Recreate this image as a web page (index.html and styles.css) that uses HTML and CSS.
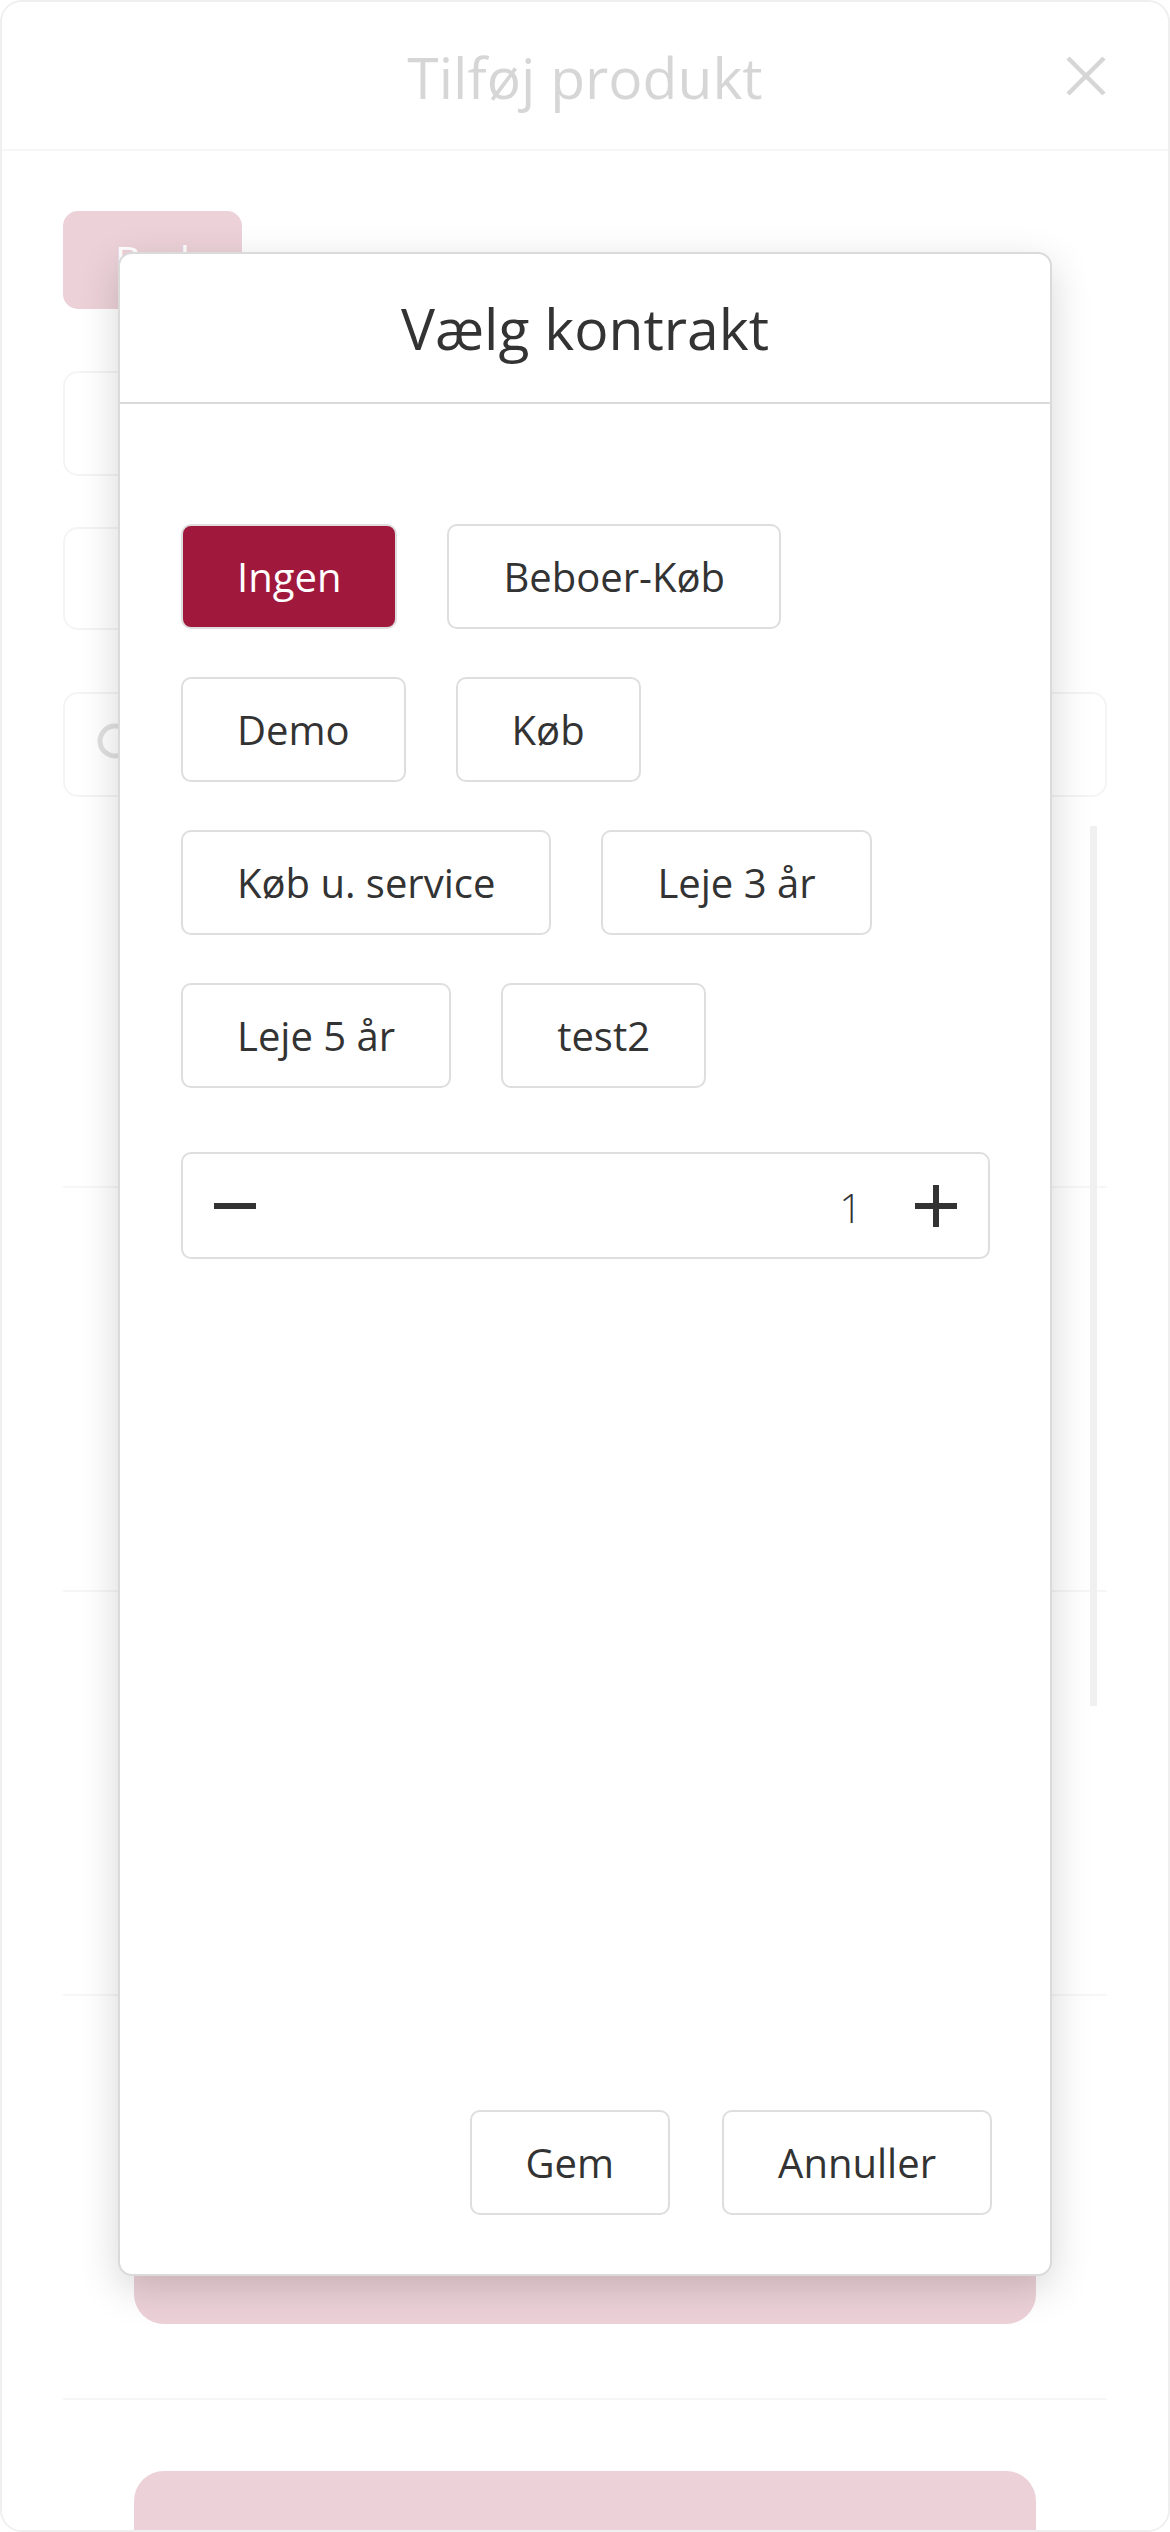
FILE: index.html
```html
<!DOCTYPE html>
<html lang="da">
<head>
<meta charset="utf-8">
<title>Vælg kontrakt</title>
<link rel="stylesheet" href="styles.css">
</head>
<body>
<div class="page">
  <header class="page-header">
    <span class="spacer"></span>
    <h1 class="page-title">Tilføj produkt</h1>
    <button class="close-btn" aria-label="Luk">
      <svg width="40" height="40" viewBox="0 0 40 40"><path d="M2 2 L38 38 M38 2 L2 38" stroke="#333" stroke-width="4.5" fill="none"/></svg>
    </button>
  </header>
  <main class="page-body">
    <button class="brand-btn">Bud</button>
    <div class="field field-a"></div>
    <div class="field field-b"></div>
    <div class="field search">
      <svg class="search-icon" width="48" height="48" viewBox="0 0 48 48"><circle cx="20" cy="20" r="15" stroke="#666" stroke-width="5" fill="none"/><path d="M31 31 L44 44" stroke="#666" stroke-width="5"/></svg>
    </div>
    <div class="list">
      <div class="scrollbar"></div>
      <div class="item item-first"></div>
      <div class="item"></div>
      <div class="item"></div>
      <div class="item item-end"><div class="add-btn"></div></div>
      <div class="item item-start"><div class="add-btn"></div></div>
    </div>
  </main>
  <div class="backdrop"></div>
  <section class="modal">
    <header class="modal-header"><h2 class="modal-title">Vælg kontrakt</h2></header>
    <div class="modal-body">
      <div class="chips">
        <button class="chip selected">Ingen</button>
        <button class="chip">Beboer-Køb</button>
        <button class="chip">Demo</button>
        <button class="chip">Køb</button>
        <button class="chip">Køb u. service</button>
        <button class="chip">Leje 3 år</button>
        <button class="chip">Leje 5 år</button>
        <button class="chip">test2</button>
      </div>
      <div class="stepper">
        <svg class="step-icon" width="44" height="44" viewBox="0 0 44 44"><path d="M1 22 H43" stroke="#333" stroke-width="6"/></svg>
        <span class="step-value">1</span>
        <svg class="step-icon plus" width="44" height="44" viewBox="0 0 44 44"><path d="M1 22 H43 M22 1 V43" stroke="#333" stroke-width="6"/></svg>
      </div>
    </div>
    <footer class="modal-footer">
      <button class="chip">Gem</button>
      <button class="chip">Annuller</button>
    </footer>
  </section>
</div>
</body>
</html>
```
FILE: styles.css
```css
* { box-sizing: border-box; }
html, body { margin: 0; padding: 0; background: #fff; }
body { font-family: "Open Sans", "Noto Sans", sans-serif; color: #333; }
button { font-family: inherit; }

.page {
  position: relative;
  width: 1170px;
  height: 2532px;
  overflow: hidden;
  border: 2px solid #efefef;
  border-radius: 22px;
  background: #fff;
}

.page-header {
  height: 149px;
  border-bottom: 2px solid #cfcfcf;
  display: grid;
  grid-template-columns: 1fr auto 1fr;
  align-items: center;
}
.page-title {
  margin: 0;
  font-size: 57px;
  font-weight: 400;
  color: #333;
  line-height: 1;
  padding-top: 4px;
}
.close-btn {
  justify-self: end;
  margin-right: 62px;
  border: 0;
  background: none;
  padding: 0;
  display: flex;
}

.page-body {
  padding: 60px 61px 0;
}
.brand-btn {
  display: block;
  width: 179px;
  height: 98px;
  border: 0;
  border-radius: 15px;
  background: #a0193d;
  color: #fff;
  font-size: 40px;
  padding: 0;
}
.field {
  border: 2px solid #c8c8c8;
  border-radius: 15px;
  background: #fff;
}
.field-a { width: 960px; height: 105px; margin-top: 62px; }
.field-b { width: 960px; height: 103px; margin-top: 51px; }
.search {
  height: 105px;
  margin-top: 62px;
  display: flex;
  align-items: center;
  padding-left: 30px;
}

.list {
  position: relative;
  margin-top: 29px;
}
.scrollbar {
  position: absolute;
  right: 10px;
  top: 0;
  width: 7px;
  height: 880px;
  background: #b4b4b4;
}
.item {
  height: 402px;
  border-bottom: 2px solid #cfcfcf;
  box-sizing: content-box;
  display: flex;
  flex-direction: column;
}
.item-first { height: 360px; }
.item-end { justify-content: flex-end; }
.item-end .add-btn { margin-bottom: 74px; }
.item-start { padding-top: 71px; height: 331px; }
.add-btn {
  margin-left: 71px;
  width: 902px;
  height: 103px;
  border-radius: 30px;
  background: #a0193d;
}

.backdrop {
  position: absolute;
  inset: 0;
  background: rgba(255, 255, 255, 0.8);
}

.modal {
  position: absolute;
  left: 116px;
  top: 250px;
  width: 934px;
  height: 2024px;
  border: 2px solid #dadada;
  border-radius: 14px;
  background: #fff;
  box-shadow: 0 12px 40px rgba(0, 0, 0, 0.16);
  display: flex;
  flex-direction: column;
}
.modal-header {
  height: 150px;
  border-bottom: 2px solid #dadada;
  display: flex;
  align-items: center;
  justify-content: center;
}
.modal-title {
  margin: 0;
  font-size: 57px;
  font-weight: 400;
  line-height: 1;
  color: #333;
}
.modal-body {
  flex: 1;
  padding: 120px 60px 0 61px;
}
.chips {
  display: flex;
  flex-wrap: wrap;
  gap: 48px 50px;
}
.chip {
  height: 105px;
  padding: 0 54px;
  border: 2px solid #dedede;
  border-radius: 10px;
  background: #fff;
  color: #333;
  font-size: 40px;
  font-weight: 400;
  line-height: 1;
  display: flex;
  align-items: center;
}
.chip.selected {
  background: #a0193d;
  color: #fff;
}
.stepper {
  margin-top: 64px;
  height: 107px;
  border: 2px solid #dedede;
  border-radius: 10px;
  display: flex;
  align-items: center;
  padding: 0 30px;
}
.step-icon { flex: none; }
.step-value {
  flex: 1;
  text-align: right;
  font-size: 40px;
  font-weight: 300;
  color: #333;
  margin-right: 52px;
  padding-top: 4px;
}
.modal-footer {
  display: flex;
  justify-content: flex-end;
  gap: 52px;
  padding: 0 58px 59px;
}
```
